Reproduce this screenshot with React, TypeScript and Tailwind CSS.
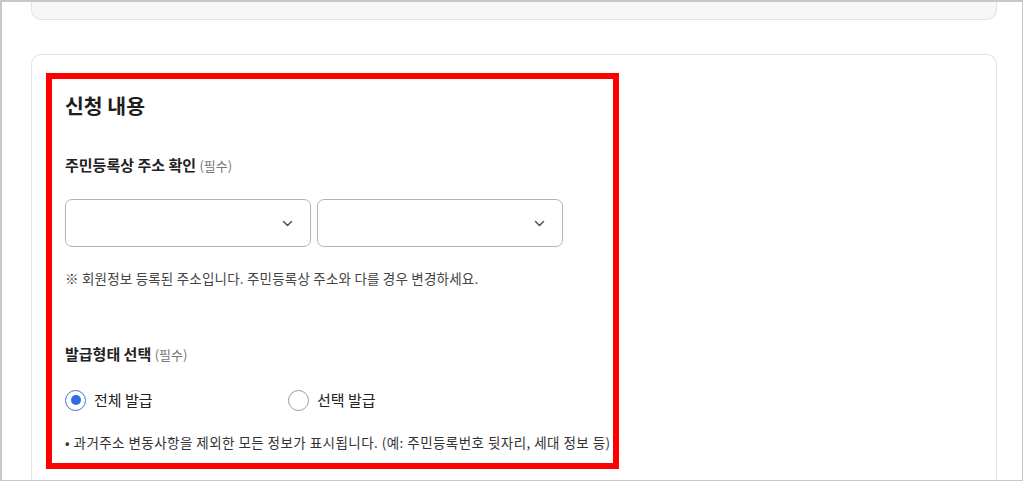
import React from "react";

function Chevron() {
  return (
    <svg width="11" height="7" viewBox="0 0 11 7" fill="none" className="shrink-0">
      <polyline points="1.5,1.5 5.5,5.5 9.5,1.5" stroke="#555" strokeWidth="1.6" strokeLinecap="round" strokeLinejoin="round" />
    </svg>
  );
}

function SelectBox() {
  return (
    <div className="w-[246px] h-[48px] rounded-[7px] border border-[#b4b4b4] bg-white flex items-center justify-end pr-[17px]">
      <Chevron />
    </div>
  );
}

function Radio({ checked, label }: { checked: boolean; label: string }) {
  return (
    <div className="flex items-center gap-[8px]">
      <div
        className={
          checked
            ? "w-[21px] h-[21px] rounded-full border-[1.5px] border-[#3a72d8] flex items-center justify-center bg-white"
            : "w-[21px] h-[21px] rounded-full border-[1.5px] border-[#9a9a9a] bg-white"
        }
      >
        {checked && <div className="w-[10px] h-[10px] rounded-full bg-[#2f6de0]" />}
      </div>
      <span className="text-[15px] leading-[22px] text-[#222]">{label}</span>
    </div>
  );
}

export default function App() {
  return (
    <div
      className="w-[1024px] h-[482px] bg-white overflow-hidden"
      style={{ fontFamily: '"Noto Sans CJK KR", "Noto Sans", sans-serif' }}
    >
      <div className="w-[1023px] h-[481px] border-2 border-r border-b border-[#c8c8c8] pl-[29px] pr-[25px] flex flex-col overflow-hidden">
        <div className="h-[18px] shrink-0 rounded-b-[10px] border border-t-0 border-[#e2e2e2] bg-[#f7f7f7]" />
        <div className="mt-[34px] flex-1 rounded-t-[10px] border border-b-0 border-[#e3e3e3] bg-white pl-[14px] pt-[18px]">
          <div className="w-[573px] border-[6px] border-[#ff0000] pl-[13px] pt-[12px] pb-[11px]">
            <div className="text-[20.5px] leading-[28px] font-bold text-[#1e1e1e]">신청 내용</div>

            <div className="mt-[36px] text-[15px] leading-[20px] font-bold text-[#222]">
              주민등록상 주소 확인 <span className="font-normal text-[13px] text-[#777]">(필수)</span>
            </div>

            <div className="mt-[23px] flex gap-[6px]">
              <SelectBox />
              <SelectBox />
            </div>

            <div className="mt-[21px] text-[13.5px] leading-[20px] text-[#444] tracking-[0.2px]">
              ※ 회원정보 등록된 주소입니다. 주민등록상 주소와 다를 경우 변경하세요.
            </div>

            <div className="mt-[56px] text-[15px] leading-[20px] font-bold text-[#222]">
              발급형태 선택 <span className="font-normal text-[13px] text-[#777]">(필수)</span>
            </div>

            <div className="mt-[24px] flex">
              <div className="w-[223px]">
                <Radio checked label="전체 발급" />
              </div>
              <Radio checked={false} label="선택 발급" />
            </div>

            <div className="mt-[21px] text-[13.5px] leading-[20px] text-[#333] tracking-[0.45px] whitespace-nowrap">
              • 과거주소 변동사항을 제외한 모든 정보가 표시됩니다. (예: 주민등록번호 뒷자리, 세대 정보 등)
            </div>
          </div>
        </div>
      </div>
    </div>
  );
}
